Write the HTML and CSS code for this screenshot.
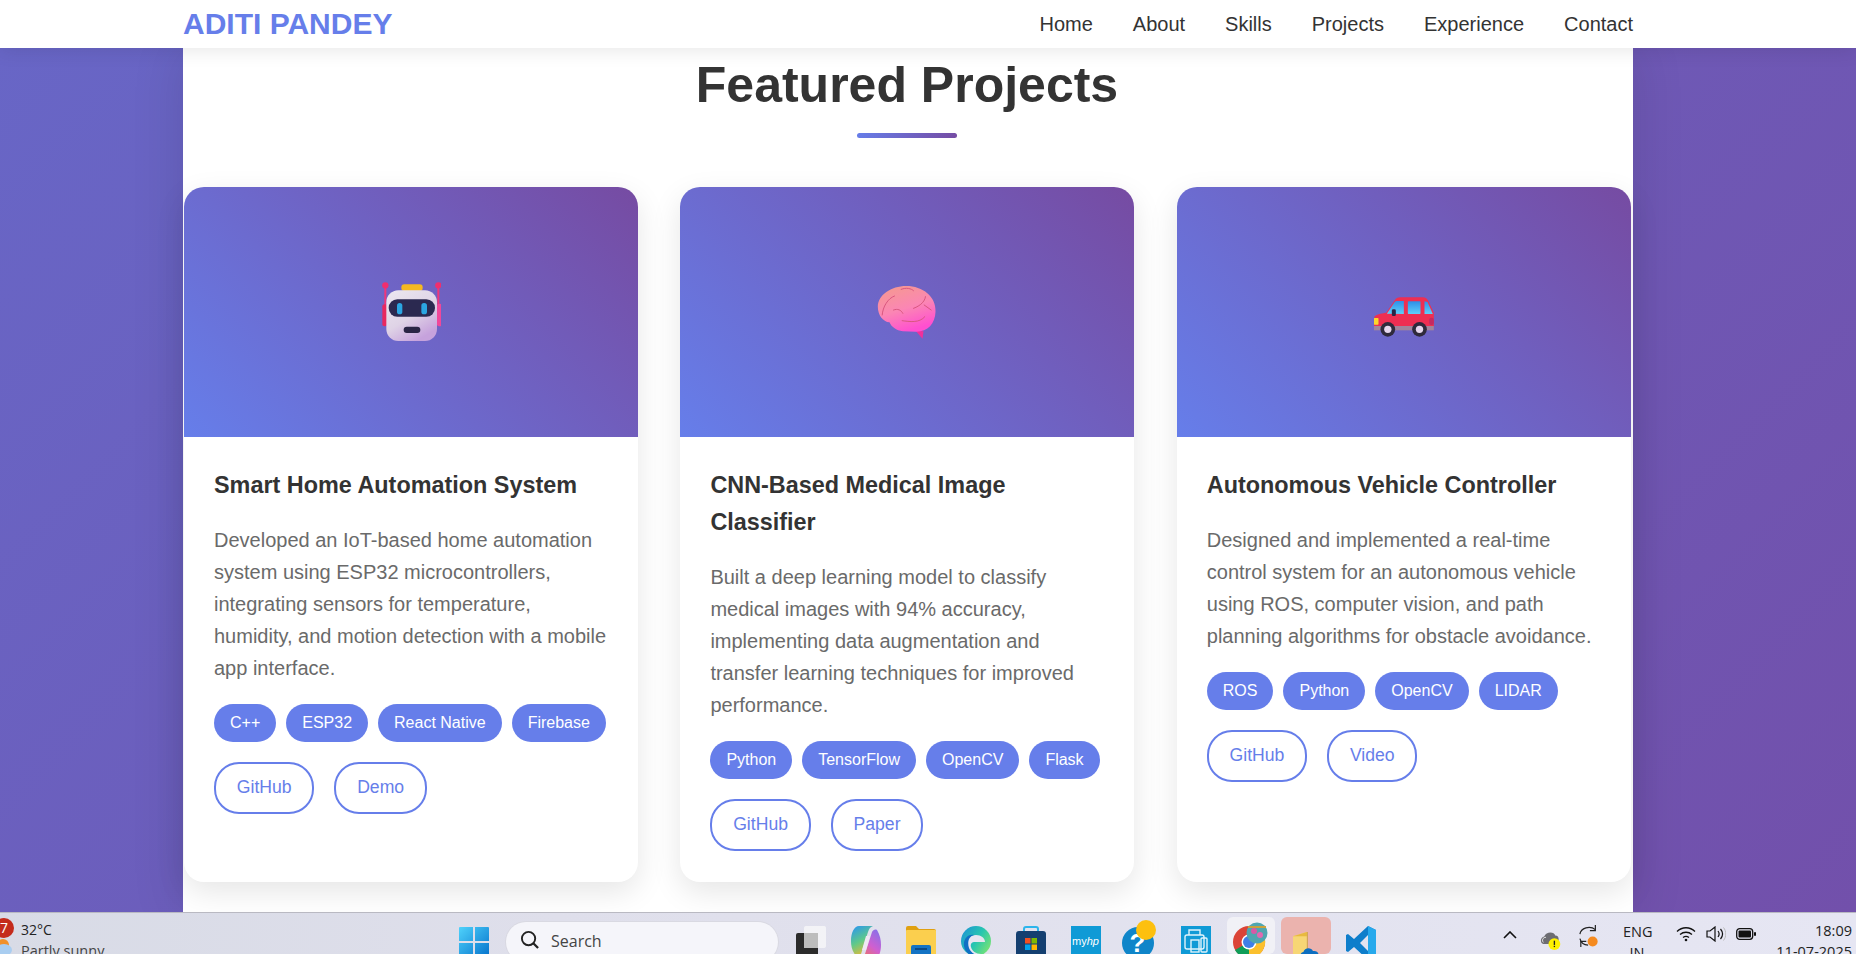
FILE: index.html

```html
<!DOCTYPE html>
<html lang="en">
<head>
  <meta charset="UTF-8">
  <meta name="viewport" content="width=device-width, initial-scale=1.0">
  <title>Aditi Pandey - Projects</title>
  <link rel="stylesheet" href="styles.css">
</head>
<body>
  <nav class="navbar">
    <div class="nav-inner">
      <a class="logo">ADITI PANDEY</a>
      <ul class="nav-links">
        <li>Home</li>
        <li>About</li>
        <li>Skills</li>
        <li>Projects</li>
        <li>Experience</li>
        <li>Contact</li>
      </ul>
    </div>
  </nav>

  <main class="stage">
    <section class="sheet">
      <h2 class="section-title">Featured Projects</h2>
      <div class="title-rule"></div>

      <div class="projects">
        <article class="card">
          <div class="card-image">
            <svg class="emoji" viewBox="120 63 180 180">
              <defs>
                <linearGradient id="head" x1="0" y1="0" x2="0.6" y2="1">
                  <stop offset="0" stop-color="#ece8f0"/>
                  <stop offset="0.6" stop-color="#dfd3e6"/>
                  <stop offset="1" stop-color="#c6a2dc"/>
                </linearGradient>
              </defs>
              <rect x="130" y="72" width="6" height="60" fill="#f0367a"/>
              <rect x="289" y="72" width="6" height="60" fill="#f0367a"/>
              <circle cx="133" cy="73" r="9.500" fill="#f02e6e"/>
              <circle cx="292" cy="73" r="9.500" fill="#f02e6e"/>
              <rect x="124" y="130" width="14" height="66" rx="6" fill="#e8285f"/>
              <rect x="288" y="128" width="14" height="68" rx="6" fill="#f0479a"/>
              <rect x="181" y="70" width="64" height="20" rx="9" fill="#f5b921"/>
              <rect x="136" y="88" width="152" height="152" rx="36" fill="url(#head)"/>
              <rect x="143" y="115" width="139" height="52" rx="26" fill="#2b2950"/>
              <rect x="168" y="126" width="16" height="34" rx="8" fill="#2ba6e2"/>
              <rect x="241" y="126" width="17" height="34" rx="8" fill="#2ba6e2"/>
              <rect x="188" y="197" width="50" height="19" rx="9.500" fill="#2a2545"/>
            </svg>
          </div>
          <div class="card-body">
            <h3>Smart Home Automation System</h3>
            <p>Developed an IoT-based home automation system using ESP32 microcontrollers, integrating sensors for temperature, humidity, and motion detection with a mobile app interface.</p>
            <div class="tags">
              <span class="tag">C++</span>
              <span class="tag">ESP32</span>
              <span class="tag">React Native</span>
              <span class="tag">Firebase</span>
            </div>
            <div class="links">
              <a class="btn">GitHub</a>
              <a class="btn">Demo</a>
            </div>
          </div>
        </article>

        <article class="card">
          <div class="card-image">
            <svg class="emoji" viewBox="82.5 66 180 180">
              <defs>
                <linearGradient id="brain" x1="0.1" y1="0" x2="0.5" y2="1">
                  <stop offset="0" stop-color="#f59a8e"/>
                  <stop offset="0.55" stop-color="#fb86b4"/>
                  <stop offset="1" stop-color="#ff4fd0"/>
                </linearGradient>
              </defs>
              <path d="M198 212 L219 236 L222 214 Z" fill="#f0309c"/>
              <path d="M85 140 C85 105 125 78 170 78 C220 78 260 110 258 155 C257 190 235 215 200 215 L160 214 C140 212 125 200 120 187 C100 185 85 165 85 140 Z" fill="url(#brain)"/>
              <g fill="none" stroke="#d9577f" stroke-width="3" stroke-linecap="round">
                <path d="M98 165 C100 140 115 115 135 108"/>
                <path d="M155 88 C170 82 185 85 192 92"/>
                <path d="M192 145 C205 140 225 130 228 110"/>
                <path d="M132 150 C145 145 155 150 160 160"/>
                <path d="M158 182 C180 185 210 190 226 170"/>
                <path d="M224 135 L245 150"/>
              </g>
            </svg>
          </div>
          <div class="card-body">
            <h3>CNN-Based Medical Image Classifier</h3>
            <p>Built a deep learning model to classify medical images with 94% accuracy, implementing data augmentation and transfer learning techniques for improved performance.</p>
            <div class="tags">
              <span class="tag">Python</span>
              <span class="tag">TensorFlow</span>
              <span class="tag">OpenCV</span>
              <span class="tag">Flask</span>
            </div>
            <div class="links">
              <a class="btn">GitHub</a>
              <a class="btn">Paper</a>
            </div>
          </div>
        </article>

        <article class="card">
          <div class="card-image">
            <svg class="emoji" viewBox="88.5 36 180 180">
              <defs>
                <linearGradient id="glass" x1="0" y1="0" x2="0" y2="1">
                  <stop offset="0" stop-color="#2f8fe8"/>
                  <stop offset="1" stop-color="#5fd0fa"/>
                </linearGradient>
              </defs>
              <path d="M90 140 C92 134 110 130 125 128 L150 92 C154 85 160 82 168 82 L235 82 C243 82 248 86 251 92 L268 128 L268 172 L88 172 Z" fill="#ee2f52"/>
              <rect x="88" y="168" width="180" height="13" fill="#a2849c"/>
              <path d="M127 131 L150 97 C152 94 155 93 158 93 L178 93 L178 132 Z" fill="url(#glass)"/>
              <rect x="190" y="94" width="38" height="38" rx="2" fill="url(#glass)"/>
              <path d="M240 94 L249 96 L265 132 L240 132 Z" fill="url(#glass)"/>
              <rect x="142" y="118" width="12" height="20" rx="4" fill="#2a2545"/>
              <rect x="88" y="144" width="14" height="20" rx="2" fill="#fbd72b"/>
              <rect x="254" y="143" width="14" height="22" rx="6" fill="#c42a63"/>
              <circle cx="130" cy="178" r="22" fill="#2f2a3c"/>
              <circle cx="130" cy="178" r="11" fill="#e6d7ee"/>
              <circle cx="225" cy="178" r="22" fill="#2f2a3c"/>
              <circle cx="225" cy="178" r="11" fill="#e6d7ee"/>
            </svg>
          </div>
          <div class="card-body">
            <h3>Autonomous Vehicle Controller</h3>
            <p>Designed and implemented a real-time control system for an autonomous vehicle using ROS, computer vision, and path planning algorithms for obstacle avoidance.</p>
            <div class="tags">
              <span class="tag">ROS</span>
              <span class="tag">Python</span>
              <span class="tag">OpenCV</span>
              <span class="tag">LIDAR</span>
            </div>
            <div class="links">
              <a class="btn">GitHub</a>
              <a class="btn">Video</a>
            </div>
          </div>
        </article>
      </div>
    </section>
  </main>

  <footer class="taskbar">
    <div class="weather">
      <span class="weather-badge">7</span>
      <svg class="weather-icon" viewBox="0 0 14 16">
        <circle cx="3" cy="6" r="6" fill="#f0902a"/>
        <ellipse cx="4" cy="11" rx="8" ry="6" fill="#a9cdf0"/>
      </svg>
      <div class="weather-text">
        <div class="temp">32°C</div>
        <div class="sky">Partly sunny</div>
      </div>
    </div>

    <svg class="start" viewBox="0 0 30 30">
      <defs>
        <linearGradient id="win" x1="0" y1="0" x2="1" y2="1">
          <stop offset="0" stop-color="#4fd2fb"/>
          <stop offset="1" stop-color="#0472cc"/>
        </linearGradient>
      </defs>
      <path d="M1 0h13v14H0V1a1 1 0 0 1 1-1zM16 0h13a1 1 0 0 1 1 1v13H16zM0 16h14v14H1a1 1 0 0 1-1-1zM16 16h14v13a1 1 0 0 1-1 1H16z" fill="url(#win)"/>
    </svg>

    <div class="search">
      <svg class="search-icon" viewBox="0 0 20 20">
        <circle cx="9" cy="9" r="7" fill="none" stroke="#222" stroke-width="2"/>
        <path d="M14 14l5 5" stroke="#222" stroke-width="2.400"/>
      </svg>
      <span>Search</span>
    </div>

    <div class="apps">
      <div class="app">
        <svg class="icon" viewBox="0 0 30 30">
          <rect x="0" y="7" width="22" height="30" rx="2" fill="#2b2b2b"/>
          <rect x="8" y="0" width="22" height="22" rx="2" fill="#f5f5f7" opacity="0.9"/>
          <rect x="8" y="7" width="14" height="15" fill="#bdbdbd"/>
        </svg>
      </div>
      <div class="app">
        <svg class="icon" viewBox="0 0 30 30">
          <defs>
            <linearGradient id="cop1" x1="0.2" y1="0" x2="0.6" y2="1">
              <stop offset="0" stop-color="#2f9ae8"/>
              <stop offset="0.5" stop-color="#5fc98a"/>
              <stop offset="1" stop-color="#f5b92e"/>
            </linearGradient>
            <linearGradient id="cop2" x1="0.8" y1="0" x2="0.2" y2="1">
              <stop offset="0" stop-color="#8a6fe8"/>
              <stop offset="0.5" stop-color="#d05fd0"/>
              <stop offset="1" stop-color="#f0784c"/>
            </linearGradient>
          </defs>
          <path d="M8 0h14c-3 1-4 3-5 6L10 28c-1 2-3 3-5 2C1 25 0 20 0 15 0 7 3 0 8 0z" fill="url(#cop1)"/>
          <path d="M22 34H8c3-1 5-3 6-6l7-22c1-2 3-3 5-2 3 5 4 10 4 15 0 8-3 15-8 15z" fill="url(#cop2)"/>
          <path d="M15 10h4l-4 14h-4z" fill="#f0e8f4"/>
        </svg>
      </div>
      <div class="app">
        <svg class="icon" viewBox="0 0 30 30">
          <path d="M0 2a2 2 0 0 1 2-2h8l3 3h15a2 2 0 0 1 2 2v6H0z" fill="#e0a011"/>
          <rect x="0" y="4" width="30" height="28" rx="1" fill="#fbcf4e"/>
          <rect x="5" y="19" width="20" height="14" rx="2" fill="#1473c4"/>
          <rect x="9" y="22" width="12" height="2" fill="#0a4a88"/>
        </svg>
      </div>
      <div class="app">
        <svg class="icon" viewBox="0 0 30 30">
          <defs>
            <linearGradient id="edge" x1="0" y1="0" x2="1" y2="0.6">
              <stop offset="0" stop-color="#1a8fd8"/>
              <stop offset="0.6" stop-color="#28c6b0"/>
              <stop offset="1" stop-color="#6fe07a"/>
            </linearGradient>
          </defs>
          <circle cx="15" cy="15" r="15" fill="url(#edge)"/>
          <path d="M5 22C3 14 9 9 15 9c5 0 9 3 9 7H13c-2 0-4 2-3 5 1 4 5 7 10 7-8 4-13 0-15-6z" fill="#e6e5f1"/>
          <path d="M3 20C2 12 8 8 13 9 8 10 6 16 8 22c2 5 7 8 12 7-8 3-16-1-17-9z" fill="#0f6fc4"/>
        </svg>
      </div>
      <div class="app">
        <svg class="icon" viewBox="0 0 30 30">
          <path d="M8 6V3a2 2 0 0 1 2-2h10a2 2 0 0 1 2 2v3" fill="none" stroke="#2cb5ec" stroke-width="2"/>
          <rect x="0" y="5" width="30" height="30" rx="3" fill="#143f70"/>
          <rect x="9" y="12" width="5.500" height="5.500" fill="#f25022"/>
          <rect x="15.500" y="12" width="5.500" height="5.500" fill="#7fba00"/>
          <rect x="9" y="18.500" width="5.500" height="5.500" fill="#00a4ef"/>
          <rect x="15.500" y="18.500" width="5.500" height="5.500" fill="#ffb900"/>
        </svg>
      </div>
      <div class="app">
        <div class="myhp">my<i>hp</i></div>
      </div>
      <div class="app help">
        <span class="help-mark">?</span>
        <span class="help-dot"></span>
      </div>
      <div class="app">
        <svg class="icon" viewBox="0 0 30 30">
          <rect x="0" y="0" width="30" height="34" fill="#0f9ad6"/>
          <g fill="none" stroke="#dff3fb" stroke-width="1.400">
            <path d="M8 9V4h11v5"/>
            <rect x="4" y="9" width="19" height="14" rx="2"/>
            <rect x="10" y="14" width="8" height="12"/>
            <rect x="20" y="12" width="6" height="14" rx="1"/>
          </g>
        </svg>
      </div>
      <div class="app">
        <div class="tile tile-chrome">
          <svg class="chrome" viewBox="0 0 36 36">
            <circle cx="16" cy="20" r="16" fill="#db4437"/>
            <path d="M16 20L2 28a16 16 0 0 0 14 8z" fill="#0f9d58"/>
            <path d="M16 20v16a16 16 0 0 0 14-24z" fill="#fbc02d"/>
            <circle cx="16" cy="20" r="7.500" fill="#fff"/>
            <circle cx="16" cy="20" r="6" fill="#3f7fe8"/>
            <circle cx="24" cy="11" r="10.500" fill="#4fa6b0"/>
            <circle cx="21" cy="9" r="3" fill="#d85aa5"/>
            <circle cx="27" cy="13" r="3" fill="#e06ab0"/>
            <path d="M15 5h18" stroke="#c9a13c" stroke-width="2"/>
          </svg>
        </div>
      </div>
      <div class="app">
        <div class="tile tile-drive">
          <svg class="drive" viewBox="0 0 30 30">
            <path d="M0 5l16-5v30H0z" fill="#f7d675"/>
            <path d="M0 5L16 0v5z" fill="#e8b93f"/>
            <path d="M16 0h1v24h-1z" fill="#c9a13c"/>
            <path d="M11 30c-3 0-4-6 1-7 1-5 9-6 11-1 5-1 8 3 6 8z" fill="#0c6ec0"/>
          </svg>
        </div>
      </div>
      <div class="app">
        <svg class="icon" viewBox="0 0 30 30">
          <path d="M22 0l8 4v26l-8 4-14-13-6 5-2-1V9l2-1 6 5zM22 9l-8 8 8 8z" fill="#0e7ecb"/>
          <path d="M22 0l8 4v26l-8 4z" fill="#27a9ec"/>
        </svg>
      </div>
    </div>

    <div class="tray">
      <svg class="tray-chevron" viewBox="0 0 14 8">
        <path d="M1 7l6-6 6 6" fill="none" stroke="#111" stroke-width="1.600"/>
      </svg>
      <svg class="tray-cloud" viewBox="0 0 26 26">
        <path d="M4 19C0 18 0 11 5 10c2-6 12-6 13-1 3 0 4 2 4 4v6z" fill="#6d6d72"/>
        <path d="M4 17c-2-2-1-6 3-6" fill="none" stroke="#fff" stroke-width="1"/>
        <circle cx="17" cy="19" r="7" fill="#fff200"/>
        <rect x="16.200" y="15" width="1.600" height="5" fill="#222"/>
        <rect x="16.200" y="21" width="1.600" height="1.600" fill="#222"/>
      </svg>
      <svg class="tray-sync" viewBox="0 0 22 26">
        <path d="M1 11C2 4 12 1 18 6" fill="none" stroke="#222" stroke-width="1.300"/>
        <path d="M18 1v6h-6" fill="none" stroke="#222" stroke-width="1.300"/>
        <path d="M1 16c1 4 4 7 9 7" fill="none" stroke="#222" stroke-width="1.300"/>
        <path d="M2 25v-6h6" fill="none" stroke="#222" stroke-width="1.300"/>
        <circle cx="15" cy="19" r="5.500" fill="#f58a1f"/>
      </svg>
      <div class="lang">
        <div>ENG</div>
        <div>IN</div>
      </div>
      <svg class="tray-wifi" viewBox="0 0 20 16">
        <g fill="none" stroke="#111" stroke-width="1.300">
          <path d="M1 5.500c5-5 13-5 18 0"/>
          <path d="M4 8.500c3.500-3 8.500-3 12 0"/>
          <path d="M7 11.500c2-1.500 4-1.500 6 0"/>
        </g>
        <circle cx="10" cy="14" r="1.300" fill="#111"/>
      </svg>
      <svg class="tray-volume" viewBox="0 0 20 16">
        <path d="M1 5h3l5-4v14l-5-4H1z" fill="none" stroke="#111" stroke-width="1.200"/>
        <path d="M12 5c1.500 2 1.500 4 0 6M14.500 3c2.500 3 2.500 7 0 10" fill="none" stroke="#111" stroke-width="1.200"/>
        <path d="M17.500 1.500c3 4 3 9 0 13" fill="none" stroke="#bbb" stroke-width="1"/>
      </svg>
      <svg class="tray-battery" viewBox="0 0 20 12">
        <rect x="0.700" y="0.700" width="16" height="10.600" rx="3" fill="none" stroke="#111" stroke-width="1.300"/>
        <rect x="2.500" y="2.500" width="12.500" height="7" rx="1" fill="#111"/>
        <rect x="18" y="4" width="2" height="4" rx="1" fill="#111"/>
      </svg>
      <div class="clock">
        <div>18:09</div>
        <div>11-07-2025</div>
      </div>
    </div>
  </footer>
</body>
</html>
```

FILE: styles.css

```css
* { margin: 0; padding: 0; box-sizing: border-box; }

body {
  font-family: "Liberation Sans", Arial, sans-serif;
  line-height: 1.8;
  color: #333;
  height: 954px;
  overflow: hidden;
  display: flex;
  flex-direction: column;
}

/* nav */
.navbar {
  height: 48px;
  flex: none;
  background: #fff;
  box-shadow: 0 2px 20px rgba(0,0,0,0.1);
  padding-left: 183px;
  position: relative;
  z-index: 2;
}
.nav-inner {
  width: 1450px;
  height: 48px;
  display: flex;
  align-items: center;
  justify-content: space-between;
}
.logo { font-size: 30px; font-weight: bold; color: #667eea; }
.nav-links { display: flex; gap: 40px; list-style: none; font-size: 20px; }

/* page */
.stage {
  flex: 1;
  min-height: 0;
  overflow: hidden;
  padding-left: 183px;
  background: linear-gradient(135deg, #6866c6, #7250ab);
}
.sheet {
  width: 1450px;
  height: 100%;
  padding: 7px 2px 0 0;
  background: #fff;
  box-shadow: 0 0 50px rgba(0,0,0,0.12);
}
.section-title {
  font-size: 50px;
  line-height: 60px;
  text-align: center;
}
.title-rule {
  width: 100px;
  height: 5px;
  margin: 18px auto 49px;
  border-radius: 3px;
  background: linear-gradient(135deg, #667eea, #764ba2);
}
.projects {
  display: grid;
  grid-template-columns: repeat(3, 454px);
  gap: 42.4px;
  height: 695px;
  margin-left: 1px;
}

/* cards */
.card {
  background: #fff;
  border-radius: 20px;
  overflow: hidden;
  box-shadow: 0 10px 30px rgba(0,0,0,0.1);
}
.card-image {
  height: 250px;
  display: flex;
  align-items: center;
  justify-content: center;
  background: linear-gradient(45deg, #667eea, #764ba2);
}
.emoji { width: 60px; height: 60px; }
.card-body { padding: 30px; }
.card-body h3 { font-size: 23.4px; line-height: 37px; margin-bottom: 20px; }
.card-body p { font-size: 20px; line-height: 32px; color: #6a6a6a; margin-bottom: 20px; }

.tags { display: flex; flex-wrap: wrap; gap: 10px; margin-bottom: 20px; }
.tag {
  background: #667eea;
  color: #fff;
  font-size: 16px;
  padding: 4.8px 16px;
  border-radius: 20px;
}
.links { display: flex; gap: 20px; }
.btn {
  font-size: 17.6px;
  color: #667eea;
  border: 2px solid #667eea;
  border-radius: 25px;
  padding: 8px 20.8px;
}

/* windows taskbar, cut off by the bottom of the window */
.taskbar {
  height: 42px;
  flex: none;
  overflow: hidden;
  display: flex;
  align-items: flex-start;
  border-top: 1px solid #b9b9c2;
  background: linear-gradient(90deg, #d8dbe6, #dfdfeb 30%, #e6e6f3);
  font-family: "Open Sans", sans-serif;
  color: #222;
  position: relative;
  z-index: 3;
}
.weather {
  width: 459px;
  flex: none;
  position: relative;
  padding: 6px 0 0 21px;
  font-size: 14.5px;
  line-height: 21px;
}
.weather-badge {
  position: absolute;
  left: -6px;
  top: 5px;
  width: 20px;
  height: 20px;
  border-radius: 50%;
  background: #c42b1c;
  color: #fff;
  text-align: center;
  font-size: 14px;
  line-height: 20px;
}
.weather-icon { position: absolute; left: 0; top: 26px; width: 14px; height: 16px; }
.temp { font-size: 14px; }
.sky { color: #444; }

.start { width: 30px; height: 30px; flex: none; margin-top: 14px; }

.search {
  width: 272px;
  height: 40px;
  flex: none;
  margin: 9px 0 0 17px;
  padding-left: 14px;
  display: flex;
  align-items: flex-start;
  gap: 12px;
  border-radius: 20px;
  background: #f5f5fa;
  box-shadow: 0 0 0 1px #d9d9e2;
  font-size: 16px;
  line-height: 38px;
  color: #444;
}
.search-icon { width: 19px; height: 19px; margin-top: 8px; flex: none; }

.apps { display: flex; margin-left: 5px; }
.app {
  width: 55px;
  height: 41px;
  display: flex;
  justify-content: center;
  align-items: flex-start;
  padding-top: 13px;
  position: relative;
}
.icon { width: 30px; height: 30px; flex: none; }
.myhp {
  width: 30px;
  height: 34px;
  background: #0f9ad6;
  color: #fff;
  font-family: "Liberation Sans", sans-serif;
  font-size: 11px;
  line-height: 30px;
  text-align: center;
  white-space: nowrap;
}
.help-mark {
  width: 32px;
  height: 32px;
  margin: 1px 6px 0 0;
  border-radius: 50%;
  background: #0f85c9;
  color: #fff;
  font: bold 26px/32px "Liberation Sans", sans-serif;
  text-align: center;
}
.help-dot {
  position: absolute;
  left: 23px;
  top: 7px;
  width: 20px;
  height: 20px;
  border-radius: 50%;
  background: #fdc00f;
}
.tile {
  height: 37px;
  margin-top: -9px;
  padding-top: 9px;
  display: flex;
  justify-content: center;
  border-radius: 6px;
}
.tile-chrome { width: 48px; background: #f1f1f6; }
.tile-drive { width: 50px; background: #ebb3ae; }
.chrome { width: 36px; height: 36px; flex: none; margin-top: -4px; }
.drive { width: 26px; height: 30px; flex: none; margin-top: 4px; }

.tray {
  width: 349px;
  flex: none;
  margin-left: auto;
  margin-right: 4px;
  display: flex;
  align-items: flex-start;
  font-size: 14.500px;
  line-height: 21px;
}
.tray-chevron { width: 14px; height: 8px; margin-top: 18px; flex: none; }
.tray-cloud { width: 22px; height: 22px; margin: 15px 0 0 23px; flex: none; }
.tray-sync { width: 20px; height: 26px; margin: 10px 0 0 17px; flex: none; }
.lang { width: 28px; margin: 8px 0 0 24px; text-align: center; flex: none; }
.tray-wifi { width: 20px; height: 16px; margin: 13px 0 0 25px; flex: none; }
.tray-volume { width: 20px; height: 16px; margin: 13px 0 0 10px; flex: none; }
.tray-battery { width: 20px; height: 12px; margin: 15px 0 0 10px; flex: none; }
.clock { margin: 7px 0 0 auto; text-align: right; }
```
